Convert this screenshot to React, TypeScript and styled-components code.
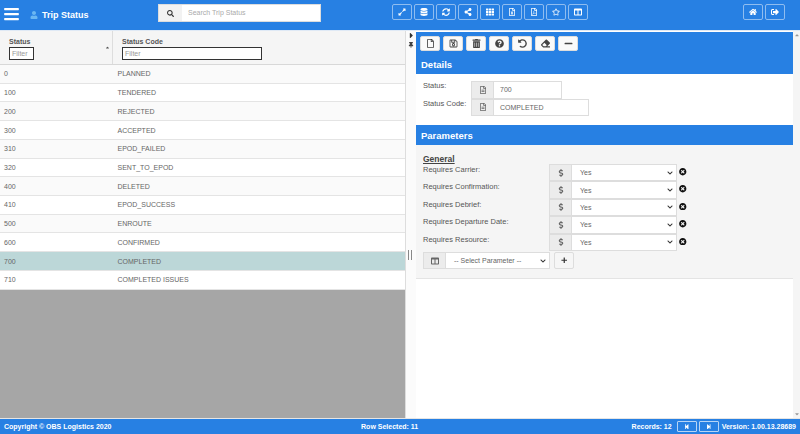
import React from 'react';
import styled, { createGlobalStyle } from 'styled-components';
import {
  FaExpandAlt, FaDatabase, FaSyncAlt, FaShareAlt, FaTh, FaRegFileExcel, FaRegFilePdf, FaRegStar, FaColumns,
  FaHome, FaSignOutAlt, FaRegFile, FaRegSave, FaTrashAlt, FaQuestionCircle, FaUndoAlt, FaEraser, FaMinus,
  FaRegFileAlt, FaSearch, FaUser, FaStepBackward, FaStepForward, FaTimesCircle, FaPlus, FaThumbtack, FaCaretRight, FaCaretUp, FaCaretDown,
  FaBars, FaDollarSign, FaChevronDown,
} from 'react-icons/fa';

const Global = createGlobalStyle`
  html, body { margin: 0; padding: 0; background: #fff; }
  body { font-family: "Liberation Sans", Arial, sans-serif; overflow: hidden; }
  * { box-sizing: border-box; }
`;
const BLUE = '#2780e3';
const Page = styled.div`
  width: 800px; height: 434px; display: flex; flex-direction: column; color: #555;
`;
const Header = styled.header`
  height: 31px; flex: none; background: ${BLUE}; border-bottom: 1px solid #dfe9f5; display: flex; align-items: flex-start; position: relative;
`;
const Burger = styled.div`
  width: 15px; margin: 6px 0 0 4px; color: #fff; display: flex; font-size: 16px; svg { transform: scaleX(1.05); }
`;
const Title = styled.div`
  display: flex; align-items: center; margin: 10px 0 0 11px; width: 128px; gap: 4px; color: #fff; font-weight: 700; font-size: 9px;
  svg { color: #6bb7f2; font-size: 8px; }
`;
const Search = styled.div`
  width: 163px; height: 18px; margin-top: 4px; display: flex; background: #fff; border: 1px solid #ddd;
`;
const SearchBtn = styled.div`
  width: 23px; background: #f2f2f2; display: flex; align-items: center; justify-content: center; font-size: 7px; color: #333;
`;
const SearchText = styled.div`
  font-size: 7px; color: #aaa; padding: 0 0 0 6px; line-height: 16px;
`;
const Tools = styled.div`
  display: flex; gap: 2px; margin: 4px 0 0 71px;
`;
const RightTools = styled(Tools)`
  margin-left: 155px;
`;
const TopBtn = styled.div`
  width: 20px; height: 16px; border: 1px solid #8fbdf0; border-radius: 2px; color: #fff; font-size: 8px; display: flex; align-items: center; justify-content: center;
`;
const Body = styled.div`
  flex: 1; display: flex; min-height: 0;
`;
const Left = styled.section`
  width: 406px; flex: none; display: flex; flex-direction: column; background: #a6a6a6; border-right: 1px solid #ddd;
`;
const GridHead = styled.div`
  display: grid; grid-template-columns: 113px 1fr; height: 34px; background: #f5f5f5; border-bottom: 1px solid #d8d8d8;
`;
const HeadCell = styled.div`
  position: relative; padding: 6px 0 0 9px; border-right: 1px solid #ddd; font-size: 7px; font-weight: 700; color: #555; line-height: 10px;
  &:last-child { border-right: none; padding-left: 9px; }
`;
const Sort = styled.span`
  position: absolute; right: 2px; top: 12px; font-size: 5px; color: #555;
`;
const Filter = styled.div<{ $w: number }>`
  width: ${(p) => p.$w}px; height: 13px; border: 1px solid #333; background: #fff; font-size: 7px; font-weight: 400; color: #999; line-height: 11px; padding-left: 2px;
`;
const Row = styled.div<{ $odd: boolean; $sel: boolean }>`
  display: grid; grid-template-columns: 113.5px 1fr; height: 18.72px; align-items: center; font-size: 7px; color: #666; border-bottom: 1px solid #e4e4e4;
  background: ${(p) => (p.$sel ? '#bcd7d8' : p.$odd ? '#fafafa' : '#fff')};
  padding-left: 4px;
`;
const Splitter = styled.div`
  width: 10px; flex: none; position: relative; background: #fbfbfb; color: #333; font-size: 7px;
`;
const Arrow = styled.span`
  position: absolute; left: 1px; top: 0; display: flex; font-size: 9px;
`;
const Pin = styled.span`
  position: absolute; left: 2px; top: 11px; display: flex; font-size: 6px; color: #444;
`;
const Grip = styled.span`
  position: absolute; left: 2px; top: 219px; width: 4px; height: 10px; border-left: 1.5px solid #888; border-right: 1.5px solid #888;
`;
const Right = styled.section`
  flex: 1; display: flex; flex-direction: column; min-width: 0; position: relative; background: #fff;
`;
const ActionBar = styled.div`
  height: 23px; flex: none; margin-top: 1px; background: ${BLUE}; display: flex; gap: 3px; padding: 4px 0 0 4px; margin-right: 7px;
`;
const ActBtn = styled.div`
  width: 20px; height: 15px; background: #fafafa; border: 1px solid #ddd; border-radius: 2px; color: #444; font-size: 9px; display: flex; align-items: center; justify-content: center;
`;
const Band = styled.div<{ $h: number }>`
  flex: none; height: ${(p) => p.$h}px; background: ${BLUE}; color: #fff; font-size: 9.5px; font-weight: 700; padding-left: 5px; margin-right: 7px; display: flex; align-items: center;
`;
const Details = styled.div`
  height: 51px; flex: none; padding: 7px 0 0 7px; margin-right: 7px; display: flex; flex-direction: column;
`;
const Line = styled.div`
  display: grid; grid-template-columns: 48px auto; justify-content: start; height: 17.5px; font-size: 7.5px; color: #555;
`;
const InputGroup = styled.div<{ $w: number }>`
  width: ${(p) => p.$w}px; height: 17.5px; display: flex; border: 1px solid #ddd; background: #fff;
`;
const Addon = styled.div`
  width: 22px; flex: none; background: #ececec; border-right: 1px solid #ddd; color: #666; font-size: 8px; display: flex; align-items: center; justify-content: center;
`;
const Value = styled.div`
  padding-left: 6px; font-size: 7px; color: #666; line-height: 15.5px;
`;
const Params = styled.div`
  height: 134px; flex: none; background: #f5f5f5; border-bottom: 1px solid #e4e4e4; margin-right: 7px; padding: 9px 0 0 7px;
`;
const General = styled.div`
  font-size: 8.5px; font-weight: 700; color: #444; text-decoration: underline; line-height: 10px;
`;
const ParamRow = styled.div`
  display: grid; grid-template-columns: 126px 128px 13px; height: 17.4px; font-size: 7.5px; color: #555;
`;
const ParamLabel = styled.div`
  line-height: 11px;
`;
const SelectGroup = styled.div<{ $w: number }>`
  display: flex; height: 17.4px; width: ${(p) => p.$w}px; border: 1px solid #ddd; background: #fff; font-size: 7px; color: #666;
`;
const SelectText = styled.div`
  flex: 1; padding-left: 8px; display: flex; align-items: center; justify-content: space-between; padding-right: 3px;
  svg { font-size: 6px; color: #333; }
`;
const Remove = styled.div`
  color: #111; font-size: 7.5px; display: flex; padding: 4px 0 0 2px;
`;
const AddRow = styled.div`
  display: flex; gap: 4px; margin-top: 1px;
`;
const PlusBtn = styled.div`
  width: 20px; height: 17px; background: #f6f6f6; border: 1px solid #ddd; border-radius: 2px; font-size: 6.5px; color: #333; display: flex; align-items: center; justify-content: center;
`;
const Scroll = styled.div`
  position: absolute; right: 0; top: 0; bottom: 0; width: 7px; background: #f5f5f5; color: #999; font-size: 6px; display: flex; flex-direction: column; justify-content: space-between; align-items: center; padding: 1px 0;
`;
const Footer = styled.footer`
  height: 16px; flex: none; background: ${BLUE}; border-top: 1px solid #e5e5e5; color: #fff; font-size: 7px; font-weight: 700; display: flex; align-items: center; padding: 0 4px; white-space: nowrap;
`;
const Copy = styled.div`
  width: 359px;
`;
const Selected = styled.div`
  width: 272px;
`;
const Pager = styled.div`
  display: flex; gap: 2px; margin: 0 3px 0 5px;
`;
const PageBtn = styled.div`
  width: 20px; height: 11px; border: 1px solid #b7d4f5; border-radius: 1px; display: flex; align-items: center; justify-content: center; font-size: 5.5px;
`;

const rows: [string, string][] = [
  ['0', 'PLANNED'], ['100', 'TENDERED'], ['200', 'REJECTED'], ['300', 'ACCEPTED'], ['310', 'EPOD_FAILED'], ['320', 'SENT_TO_EPOD'],
  ['400', 'DELETED'], ['410', 'EPOD_SUCCESS'], ['500', 'ENROUTE'], ['600', 'CONFIRMED'], ['700', 'COMPLETED'], ['710', 'COMPLETED ISSUES'],
];
const topIcons = [FaExpandAlt, FaDatabase, FaSyncAlt, FaShareAlt, FaTh, FaRegFileExcel, FaRegFilePdf, FaRegStar, FaColumns];
const actions = [FaRegFile, FaRegSave, FaTrashAlt, FaQuestionCircle, FaUndoAlt, FaEraser, FaMinus];
const params = ['Requires Carrier:', 'Requires Confirmation:', 'Requires Debrief:', 'Requires Departure Date:', 'Requires Resource:'];

export default function App() {
  return (
    <Page>
      <Global />
      <Header>
        <Burger><FaBars /></Burger>
        <Title><FaUser /><span>Trip Status</span></Title>
        <Search>
          <SearchBtn><FaSearch /></SearchBtn>
          <SearchText>Search Trip Status</SearchText>
        </Search>
        <Tools>{topIcons.map((I, i) => <TopBtn key={i}><I /></TopBtn>)}</Tools>
        <RightTools>
          <TopBtn><FaHome /></TopBtn>
          <TopBtn><FaSignOutAlt /></TopBtn>
        </RightTools>
      </Header>
      <Body>
        <Left>
          <GridHead>
            <HeadCell>Status<Filter $w={25}>Filter</Filter><Sort><FaCaretUp /></Sort></HeadCell>
            <HeadCell>Status Code<Filter $w={140}>Filter</Filter></HeadCell>
          </GridHead>
          {rows.map(([a, b], i) => (
            <Row key={a} $odd={i % 2 === 0} $sel={a === '700'}><span>{a}</span><span>{b}</span></Row>
          ))}
        </Left>
        <Splitter>
          <Arrow><FaCaretRight /></Arrow>
          <Pin><FaThumbtack /></Pin>
          <Grip />
        </Splitter>
        <Right>
          <ActionBar>{actions.map((I, i) => <ActBtn key={i}><I /></ActBtn>)}</ActionBar>
          <Band $h={19}>Details</Band>
          <Details>
            <Line>Status:<InputGroup $w={91}><Addon><FaRegFileAlt /></Addon><Value>700</Value></InputGroup></Line>
            <Line>Status Code:<InputGroup $w={118}><Addon><FaRegFileAlt /></Addon><Value>COMPLETED</Value></InputGroup></Line>
          </Details>
          <Band $h={20}>Parameters</Band>
          <Params>
            <General>General</General>
            {params.map((p) => (
              <ParamRow key={p}>
                <ParamLabel>{p}</ParamLabel>
                <SelectGroup $w={128}>
                  <Addon><FaDollarSign /></Addon>
                  <SelectText>Yes<FaChevronDown /></SelectText>
                </SelectGroup>
                <Remove><FaTimesCircle /></Remove>
              </ParamRow>
            ))}
            <AddRow>
              <SelectGroup $w={127}>
                <Addon><FaColumns /></Addon>
                <SelectText>-- Select Parameter --<FaChevronDown /></SelectText>
              </SelectGroup>
              <PlusBtn><FaPlus /></PlusBtn>
            </AddRow>
          </Params>
          <Scroll><FaCaretUp /><FaCaretDown /></Scroll>
        </Right>
      </Body>
      <Footer>
        <Copy>Copyright © OBS Logistics 2020</Copy>
        <Selected>Row Selected: 11</Selected>
        <span>Records: 12</span>
        <Pager>
          <PageBtn><FaStepBackward /></PageBtn>
          <PageBtn><FaStepForward /></PageBtn>
        </Pager>
        <span>Version: 1.00.13.28689</span>
      </Footer>
    </Page>
  );
}
